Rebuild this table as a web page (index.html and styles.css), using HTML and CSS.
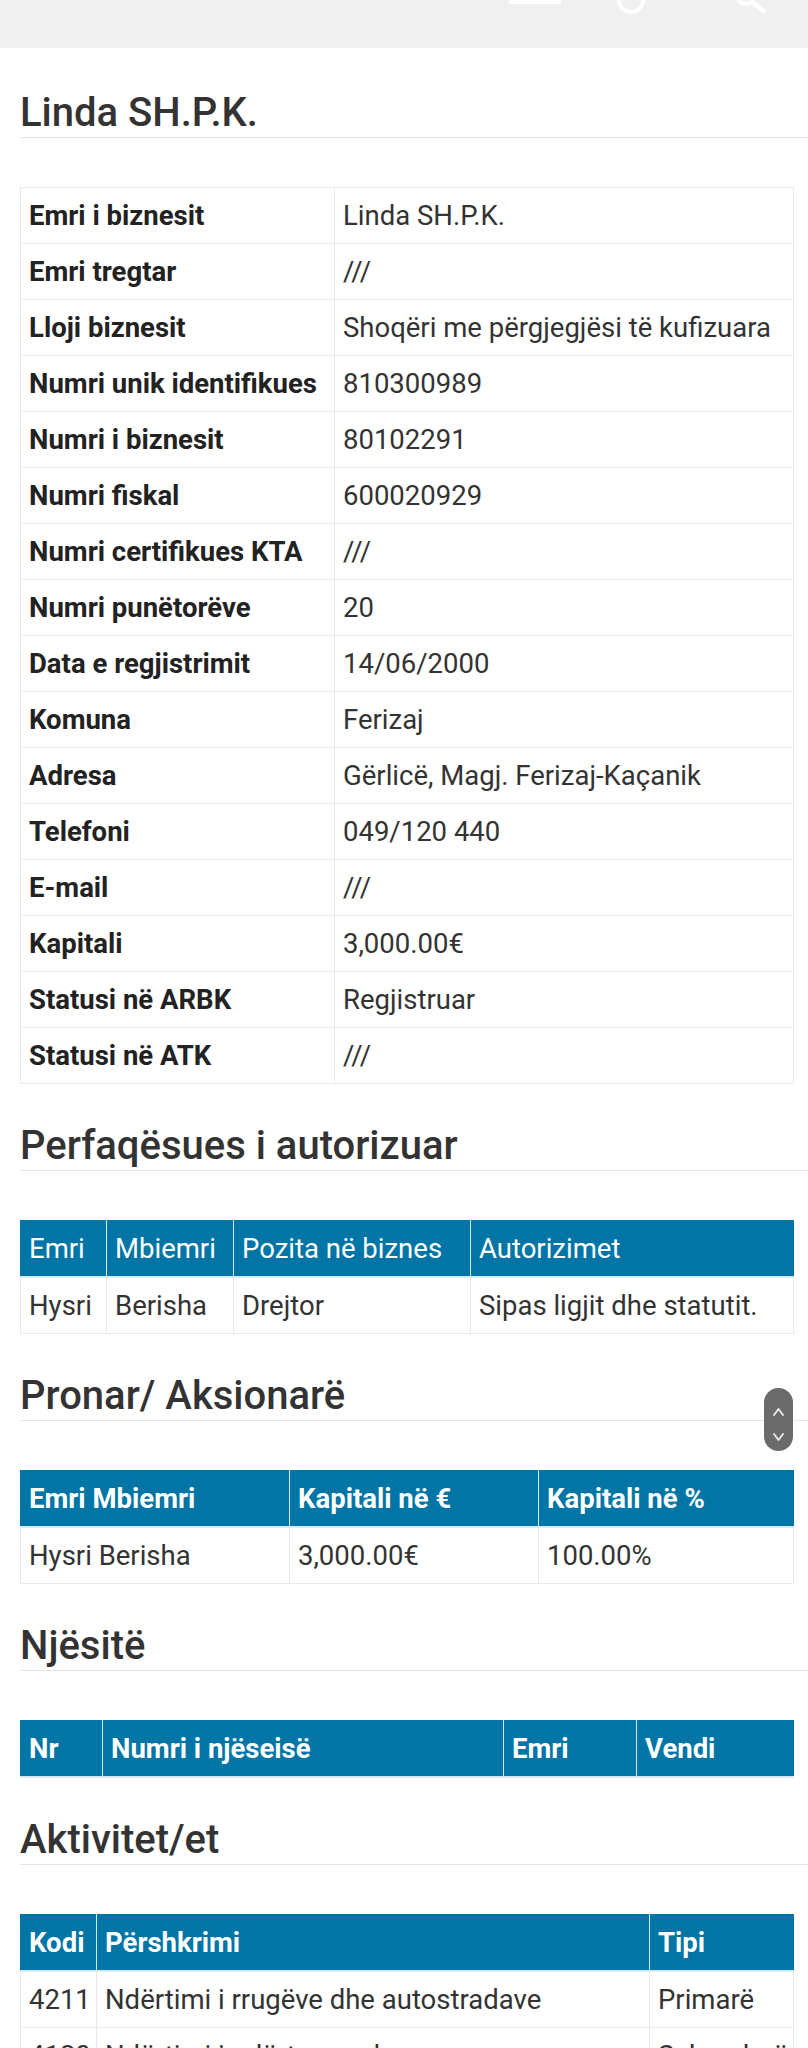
FILE: index.html
```html
<!DOCTYPE html>
<html lang="sq">
<head>
    <meta charset="UTF-8">
    <meta name="viewport" content="width=device-width, initial-scale=1.0">
    <title>Linda SH.P.K.</title>
    <link rel="stylesheet" href="styles.css">
</head>
<body>
    <header class="topbar">
        <svg class="icon icon-menu" width="52" height="4" viewBox="0 0 52 4"><rect x="0" y="0" width="52" height="4" fill="#fff"/></svg>
        <svg class="icon icon-user" width="30" height="14" viewBox="0 0 30 14"><path d="M3 0 A12 12 0 0 0 27 0" fill="none" stroke="#fff" stroke-width="4" stroke-linecap="round"/></svg>
        <svg class="icon icon-search" width="34" height="14" viewBox="0 0 34 14"><path d="M2 0 A11 11 0 0 0 14 3" fill="none" stroke="#fff" stroke-width="4"/><path d="M16 2 L28 11" stroke="#fff" stroke-width="5" stroke-linecap="round"/></svg>
    </header>

    <main class="content">
        <section class="block">
            <h2 class="block-title first">Linda SH.P.K.</h2>
            <table class="info-table">
                <colgroup><col class="col-label"><col></colgroup>
                <tbody>
                    <tr><th>Emri i biznesit</th><td>Linda SH.P.K.</td></tr>
                    <tr><th>Emri tregtar</th><td>///</td></tr>
                    <tr><th>Lloji biznesit</th><td>Shoqëri me përgjegjësi të kufizuara</td></tr>
                    <tr><th>Numri unik identifikues</th><td>810300989</td></tr>
                    <tr><th>Numri i biznesit</th><td>80102291</td></tr>
                    <tr><th>Numri fiskal</th><td>600020929</td></tr>
                    <tr><th>Numri certifikues KTA</th><td>///</td></tr>
                    <tr><th>Numri punëtorëve</th><td>20</td></tr>
                    <tr><th>Data e regjistrimit</th><td>14/06/2000</td></tr>
                    <tr><th>Komuna</th><td>Ferizaj</td></tr>
                    <tr><th>Adresa</th><td>Gërlicë, Magj. Ferizaj-Kaçanik</td></tr>
                    <tr><th>Telefoni</th><td>049/120 440</td></tr>
                    <tr><th>E-mail</th><td>///</td></tr>
                    <tr><th>Kapitali</th><td>3,000.00€</td></tr>
                    <tr><th>Statusi në ARBK</th><td>Regjistruar</td></tr>
                    <tr><th>Statusi në ATK</th><td>///</td></tr>
                </tbody>
            </table>
        </section>

        <section class="block">
            <h2 class="block-title">Perfaqësues i autorizuar</h2>
            <table class="data-table light-head">
                <colgroup><col class="w86"><col class="w127"><col class="w237"><col></colgroup>
                <thead>
                    <tr><th>Emri</th><th>Mbiemri</th><th>Pozita në biznes</th><th>Autorizimet</th></tr>
                </thead>
                <tbody>
                    <tr><td>Hysri</td><td>Berisha</td><td>Drejtor</td><td>Sipas ligjit dhe statutit.</td></tr>
                </tbody>
            </table>
        </section>

        <section class="block">
            <h2 class="block-title">Pronar/ Aksionarë</h2>
            <table class="data-table">
                <colgroup><col class="w269"><col class="w249"><col></colgroup>
                <thead>
                    <tr><th>Emri Mbiemri</th><th>Kapitali në €</th><th>Kapitali në %</th></tr>
                </thead>
                <tbody>
                    <tr><td>Hysri Berisha</td><td>3,000.00€</td><td>100.00%</td></tr>
                </tbody>
            </table>
        </section>

        <section class="block">
            <h2 class="block-title">Njësitë</h2>
            <table class="data-table">
                <colgroup><col class="w82"><col class="w401"><col class="w133"><col></colgroup>
                <thead>
                    <tr><th>Nr</th><th>Numri i njëseisë</th><th>Emri</th><th>Vendi</th></tr>
                </thead>
            </table>
        </section>

        <section class="block">
            <h2 class="block-title">Aktivitet/et</h2>
            <table class="data-table">
                <colgroup><col class="w76"><col class="w553"><col></colgroup>
                <thead>
                    <tr><th>Kodi</th><th>Përshkrimi</th><th>Tipi</th></tr>
                </thead>
                <tbody>
                    <tr><td>4211</td><td>Ndërtimi i rrugëve dhe autostradave</td><td>Primarë</td></tr>
                    <tr><td>4120</td><td>Ndërtimi i ndërtesave banesore</td><td>Sekondarë</td></tr>
                </tbody>
            </table>
        </section>
    </main>

    <div class="scroll-pill">
        <svg width="29" height="63" viewBox="0 0 29 63">
            <path d="M10 27 L14.5 21 L19 27" fill="none" stroke="#e6e6e6" stroke-width="2" stroke-linecap="round" stroke-linejoin="round"/>
            <path d="M10 46 L14.5 52 L19 46" fill="none" stroke="#e6e6e6" stroke-width="2" stroke-linecap="round" stroke-linejoin="round"/>
        </svg>
    </div>
</body>
</html>
```

FILE: styles.css
```css
* {
    box-sizing: border-box;
}

body {
    margin: 0;
    font-family: Roboto, "Noto Sans", Arial, sans-serif;
    color: #333;
    background: #fff;
    position: relative;
}

.topbar {
    height: 48px;
    background: #f0f0f0;
    display: flex;
    align-items: flex-start;
    justify-content: flex-end;
    padding-right: 38px;
}

.icon {
    display: block;
}

.icon-user {
    margin-left: 55px;
}

.icon-search {
    margin-left: 90px;
}

.content {
    padding-left: 20px;
    padding-bottom: 60px;
}

.block-title {
    font-size: 40px;
    font-weight: 500;
    line-height: 47px;
    margin: 38px 0 49px;
    padding-bottom: 1px;
    border-bottom: 1px solid #e4e4e4;
    color: #333;
}

.block-title.first {
    margin-top: 41px;
}

table {
    width: calc(100% - 14px);
    border-collapse: collapse;
    table-layout: fixed;
    font-size: 27.5px;
    line-height: 39px;
}

th, td {
    padding: 8px;
    text-align: left;
    vertical-align: top;
    border: 1px solid #e9e9e9;
    white-space: nowrap;
    overflow: hidden;
}

.info-table th {
    font-weight: 700;
    color: #222;
}

.info-table td {
    color: #333;
}

.col-label {
    width: 314px;
}

.data-table thead th {
    background: #0075a6;
    color: #fff;
    font-weight: 700;
    border-top-color: #0075a6;
    border-left: 1px solid #d6e8f0;
    border-right: 1px solid #d6e8f0;
    border-bottom: 2px solid #d9eaf2;
}

.data-table thead th:first-child {
    border-left-color: #0075a6;
}

.data-table thead th:last-child {
    border-right-color: #0075a6;
}

.light-head thead th {
    font-weight: 400;
}

.w76 { width: 76px; }
.w82 { width: 82px; }
.w86 { width: 86px; }
.w127 { width: 127px; }
.w133 { width: 133px; }
.w237 { width: 237px; }
.w249 { width: 249px; }
.w269 { width: 269px; }
.w401 { width: 401px; }
.w553 { width: 553px; }

.scroll-pill {
    position: absolute;
    left: 764px;
    top: 1388px;
    width: 29px;
    height: 63px;
    background: #6b6b6b;
    border-radius: 15px;
}

.scroll-pill svg {
    display: block;
}
```
